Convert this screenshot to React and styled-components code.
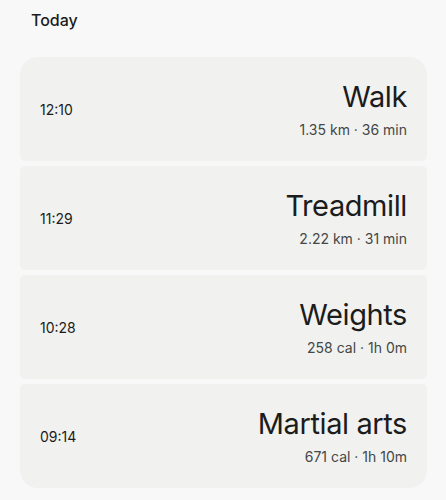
import React from 'react';
import styled, { createGlobalStyle } from 'styled-components';

const Global = createGlobalStyle`
	body {
		margin: 0;
		background: #f7f8f7;
		font-family: Inter, 'Open Sans', sans-serif;
		color: #1b1c1b;
	}
`;

const Page = styled.div`
	width: 446px;
	height: 500px;
	padding: 0 19px 0 20px;
	box-sizing: border-box;
`;

const Heading = styled.h2`
	margin: 0;
	padding: 10px 0 0 11px;
	height: 57px;
	box-sizing: border-box;
	font-size: 16px;
	font-weight: 500;
	line-height: 20px;
`;

const List = styled.div`
	display: flex;
	flex-direction: column;
	gap: 5px;
`;

const Card = styled.div`
	height: 104px;
	box-sizing: border-box;
	display: flex;
	align-items: center;
	justify-content: space-between;
	padding: 0 20px 0 20px;
	background: #f1f2f0;
	border-radius: 5px;

	&:first-child {
		border-top-left-radius: 18px;
		border-top-right-radius: 18px;
	}
	&:last-child {
		border-bottom-left-radius: 18px;
		border-bottom-right-radius: 18px;
	}
`;

const Time = styled.span`
	font-size: 14px;
`;

const Info = styled.div`
	display: flex;
	flex-direction: column;
	align-items: flex-end;
`;

const Title = styled.div`
	font-size: 29px;
	line-height: 36px;
	font-weight: 400;
	letter-spacing: -0.4px;
`;

const Detail = styled.div`
	margin-top: 6px;
	font-size: 14px;
	line-height: 18px;
	color: #444746;
`;

const sessions = [
	{ time: '12:10', title: 'Walk', detail: '1.35 km · 36 min' },
	{ time: '11:29', title: 'Treadmill', detail: '2.22 km · 31 min' },
	{ time: '10:28', title: 'Weights', detail: '258 cal · 1h 0m' },
	{ time: '09:14', title: 'Martial arts', detail: '671 cal · 1h 10m' },
];

export default () => (
	<Page>
		<Global />
		<Heading>Today</Heading>
		<List>
			{sessions.map((s) => (
				<Card key={s.time}>
					<Time>{s.time}</Time>
					<Info>
						<Title>{s.title}</Title>
						<Detail>{s.detail}</Detail>
					</Info>
				</Card>
			))}
		</List>
	</Page>
);
